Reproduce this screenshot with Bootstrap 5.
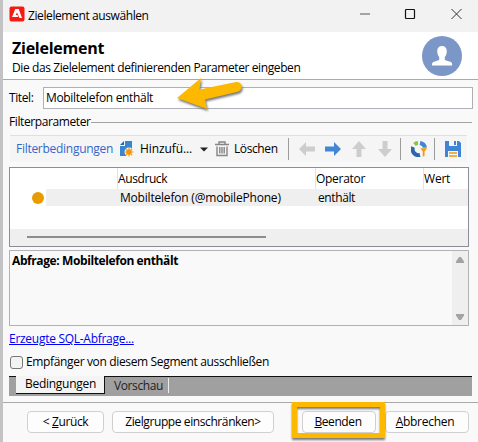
<!DOCTYPE html>
<html lang="de">
<head>
<meta charset="utf-8">
<meta name="viewport" content="width=device-width, initial-scale=1">
<title>Zielelement auswählen</title>
<link rel="stylesheet" href="https://cdn.jsdelivr.net/npm/bootstrap@5.3.0/dist/css/bootstrap.min.css">
<style>
body{font:12px/16px "Open Sans","Noto Sans",sans-serif;color:#000;background:#f9f9f9;width:478px;height:442px;overflow:hidden}
.t{white-space:nowrap;letter-spacing:-.4px}
.t2{letter-spacing:-.28px}
.t3{letter-spacing:-.2px}
.win{width:478px;height:442px;border-left:3px solid #c3c3c5;background:#f9f9f9}
.titlebar{height:32px;background:#f2f2f2;padding:0 16px 0 6px}
.head{height:48px;background:#fff;border-bottom:1px solid #a9a9a9;padding:4px 13px 0 9px}
.head h1{font-size:16px;line-height:22px;font-weight:700;margin:1px 0 0;letter-spacing:-.25px}
.head .t{margin-top:1px}
.head svg{margin-right:3px}
.titlerow{height:22px;margin:7px 5px 0 6px}
.inp{height:22px;border:1px solid #aeb0b5;background:#fff;padding:2px 2px 0}
.legend{height:16px;margin:5px 6px 0}
.legend i{height:1px;background:#a3a3a3}
.tools{height:27px;width:457px;margin:5px 0 0 7px;background:#f5f5f5;border-top:1px solid #e0e0e0;padding-left:6px}
.tools>*{flex:none}
.sep{width:1px;height:22px;background:#9b9b9b}
.list{width:460px;height:80px;margin:5px 0 0 6px;border:1px solid #8b8e98;background:#fff}
.hd{height:21px}
.hd>div{border-left:1px solid #e3e3e3;padding:3px 0 0}
.hd>.c0{width:107px;border:0}.c1{width:198px}.c2{width:108px}.c3{width:44px}
.rw{height:17px}
.dot{width:12px;height:12px;border-radius:50%;background:#e89c00;margin:0 2px 0 22px}
.sel{height:17px;background:#efefef;padding:1px 0 0 74px}
.hs{height:17px;margin-top:23px;background:#efefef;padding:7px 0 0 17px}
.hs i{display:block;width:239px;height:2px;background:#8c8c8c}
.query{width:460px;height:76px;margin:3px 0 0 6px;border:1px solid #b2b2b2}
.sb{width:16px;background:#efefef;padding:6px 0 5px}
.lnk{color:#0000f5;text-decoration:underline;height:16px;margin:5px 6px 0}
.cb{width:13px;height:13px;border:1px solid #777;border-radius:3px;background:#f3f3f3;margin:0 3px 0 1px}
.tabs{height:20px;width:463px;margin:6px 0 0 6px;background:#a0a0a0;border-top:1px solid #111;padding-left:7px}
.tab1{width:89px;height:18px;margin-top:-1px;background:#f4f4f4;border-right:1px solid #111;border-bottom:1px solid #111;padding:0 0 0 9px}
.tab2{width:64px;height:15px;margin-top:1px;border-right:1px solid #eee;padding-left:9px;color:#222;line-height:15px}
.foot{height:40px;border-top:1px solid #a9a9a9;margin-top:6px;padding:8px 6px 0 24px}
.b{height:22px;border:1px solid #d0d0d0;border-radius:4px;background:#fdfdfd;padding:0;font-size:12px;line-height:20px;color:#000}
.b:hover{background:#fff}
.hl{position:absolute;left:-10px;top:-9px;width:93px;height:36px;border:5px solid #fdb800;filter:drop-shadow(0 2px 1px #777)}
.arrow{position:absolute;left:170px;top:72px;filter:drop-shadow(1px 2px 1px #777)}
svg{display:block;flex:none}
</style>
<script src="https://cdn.jsdelivr.net/npm/bootstrap@5.3.0/dist/js/bootstrap.bundle.min.js"></script>
</head>
<body>
<main class="win">
<header class="titlebar d-flex align-items-center">
<svg class="mb-1" width="16" height="16" viewBox="0 0 16 16"><rect x=".5" y=".5" width="15" height="15" rx="2" fill="#f51b12"/><path d="M6.300 3h3.400L13 12H10.500L8 6.500 6.800 9H8.500L9.300 11H3Z" fill="#fff"/></svg>
<span class="t" style="margin-left:3px">Zielelement auswählen</span>
<svg class="ms-auto mb-1" width="104" height="12" viewBox="0 0 104 12" fill="none"><path d="M2 6H12" stroke="#777" stroke-width="1.300"/><rect x="47.500" y="1.500" width="9" height="9" rx=".7" stroke="#111" stroke-width="1.200"/><path d="M93.500 1L103.500 11M103.500 1L93.500 11" stroke="#333"/></svg>
</header>
<section class="head d-flex justify-content-between">
<div><h1>Zielelement</h1><div class="t">Die das Zielelement definierenden Parameter eingeben</div></div>
<svg width="40" height="40" viewBox="0 0 40 40"><circle cx="20" cy="20" r="20" fill="#7b97c7"/><path d="M20 10c3 0 4.800 2 4.800 5 0 3-1 5-2 6v3l6 2c1.200.6 1.400 1.500 1.400 3.500H10c0-2 .2-3 1.400-3.500L17.200 24v-3c-1-1-2-3-2-6 0-3 1.800-5 4.800-5Z" fill="#fff"/></svg>
</section>
<div class="titlerow d-flex align-items-center"><div class="t" style="width:34px">Titel:</div><div class="inp t flex-fill" style="letter-spacing:-.33px">Mobiltelefon enthält</div></div>
<div class="legend d-flex align-items-center"><span class="t">Filterparameter</span><i class="flex-fill"></i></div>
<div class="tools d-flex align-items-center">
<span class="t t2" style="color:#3467cc;width:104px">Filterbedingungen</span>
<svg width="14" height="16" viewBox="0 0 14 16"><path d="M5 0h7v15H0V5h5Z" fill="#3985d0"/><path d="M0 4L4 0V4Z" fill="#2567ae"/><circle cx="9" cy="11" r="4.500" fill="#f5f5f5"/><path d="M9 6.500V15.500M4.500 11H13.500M5.800 7.800L12.200 14.200M12.200 7.800L5.800 14.200" stroke="#f3a11c" stroke-width="1.200"/><circle cx="9" cy="11" r="2.800" fill="#f39510"/></svg>
<span class="t" style="width:60px;margin-left:6px;letter-spacing:-.1px">Hinzufü...</span>
<svg width="8" height="5" viewBox="0 0 8 5"><path d="M0 .5H8L4 4.500Z" fill="#222"/></svg>
<svg style="margin-left:7px" width="14" height="16" viewBox="0 0 14 16" fill="none" stroke="#858585" stroke-width="1.400"><path d="M0 3.500H14M4 3V1H10V3M2 5.500V14.500H12V5.500M4.800 6V12.500M7 6V12.500M9.200 6V12.500"/></svg>
<span class="t" style="width:52px;margin-left:5px">Löschen</span>
<i class="sep" style="margin-left:2px"></i>
<svg style="margin-left:10px" width="16" height="16" viewBox="0 0 16 16"><path d="M0 8L7 1V5.500H16V10.500H7V15Z" fill="#cdcdcd"/></svg>
<svg style="margin-left:10px" width="16" height="16" viewBox="0 0 16 16"><path d="M16 8L9 1V5.500H0V10.500H9V15Z" fill="#4287d5"/></svg>
<svg style="margin-left:10px" width="16" height="16" viewBox="0 0 16 16"><path d="M8 0L15 8H10.500V16H5.500V8H1Z" fill="#cdcdcd"/></svg>
<svg style="margin-left:10px" width="16" height="16" viewBox="0 0 16 16"><path d="M8 16L15 8H10.500V0H5.500V8H1Z" fill="#cdcdcd"/></svg>
<i class="sep" style="margin-left:7px"></i>
<svg style="margin-left:10px" width="16" height="16" viewBox="0 0 16 16" fill="none" stroke-width="4"><path d="M3.500 3.500A6 6 0 0 1 7 2" stroke="#8cc63f"/><path d="M9 2A6 6 0 0 1 14 7" stroke="#4287d5"/><path d="M2 6A6 6 0 0 0 9 14" stroke="#2e66ae"/><path d="M9 7H16.500L13.800 10.500V15L11.500 16V10.500Z" fill="#f19a0a" stroke="#f5f5f5" stroke-width=".5"/></svg>
<i class="sep" style="margin-left:7px"></i>
<svg style="margin-left:10px" width="16" height="16" viewBox="0 0 16 16"><path d="M0 0H4V5H12V0H14L16 2V16H0Z" fill="#3f84d6"/><path d="M9 0H11V4H9Z" fill="#3f84d6"/><path d="M3 10H13V16H3Z" fill="#f5f5f5"/><path d="M4 12H12M4 15H12" stroke="#ef9a09" stroke-width="1.600"/></svg>
</div>
<div class="list">
<div class="hd d-flex t"><div class="c0"></div><div class="c1">Ausdruck</div><div class="c2 t2">Operator</div><div class="c3 t3">Wert</div></div>
<div class="rw d-flex align-items-center t"><i class="dot"></i><div class="sel d-flex flex-fill"><span class="t3" style="width:198px">Mobiltelefon (@mobilePhone)</span><span>enthält</span></div></div>
<div class="hs"><i></i></div>
</div>
<div class="query d-flex justify-content-between"><b class="t ps-1 pt-1" style="margin-left:-2px;margin-top:-2px">Abfrage: Mobiltelefon enthält</b>
<div class="sb d-flex flex-column justify-content-between align-items-center"><svg width="8" height="6" viewBox="0 0 8 6"><path d="M3 0H5L8 4.500V6H0V4.500Z" fill="#a3a3a3"/></svg><svg width="8" height="6" viewBox="0 0 8 6"><path d="M3 6H5L8 1.500V0H0V1.500Z" fill="#a3a3a3"/></svg></div></div>
<div class="lnk t t2">Erzeugte SQL-Abfrage...</div>
<div class="d-flex align-items-center t" style="margin:7px 6px 0;letter-spacing:-.35px"><i class="cb"></i>Empfänger von diesem Segment ausschließen</div>
<div class="tabs d-flex t"><div class="tab1 t2">Bedingungen</div><div class="tab2">Vorschau</div></div>
<footer class="foot d-flex">
<button class="btn b t" style="width:77px">&lt; <u>Z</u>urück</button>
<button class="btn b t" style="width:162px;margin-left:8px">Zielgruppe einschränken&gt;</button>
<div class="position-relative" style="margin-left:28px"><button class="btn b t" style="width:74px;padding-right:2px"><u>B</u>eenden</button><i class="hl"></i></div>
<button class="btn b t t2" style="width:84px;margin-left:9px;padding-right:4px"><u>A</u>bbrechen</button>
</footer>
</main>
<svg class="arrow" width="80" height="42" viewBox="0 0 80 42"><path d="M7 26L31 6 29.500 17.500 65 10.200C73 9 74 18.500 67 20L35 27.500 37 37Z" fill="#fdb800"/></svg>
</body></html>
